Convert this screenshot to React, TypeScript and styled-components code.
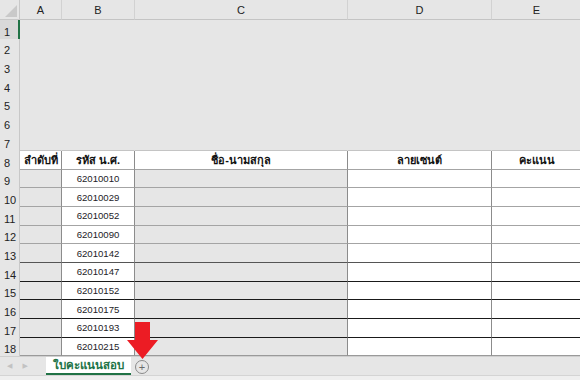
import React from 'react';
import styled, { createGlobalStyle } from 'styled-components';

const GlobalStyle = createGlobalStyle`
  html, body {
    margin: 0;
    padding: 0;
    background: #e6e6e6;
    overflow: hidden;
  }
  body {
    font-family: "Liberation Sans", "Noto Sans", "DejaVu Sans", sans-serif;
  }
`;

const Window = styled.div`
  position: relative;
  width: 580px;
  height: 380px;
  display: flex;
  flex-direction: column;
  background: #e6e6e6;
  overflow: hidden;
`;

const Sheet = styled.div`
  display: grid;
  grid-template-columns: 20px 42px 73px 213px 144px 90px;
  grid-template-rows: 20px repeat(18, 18.7px);
  width: 580px;
  overflow: hidden;
`;

const Corner = styled.div`
  position: relative;
  border-right: 1px solid #c8c8c8;
  border-bottom: 1px solid #c8c8c8;
  &::after {
    content: '';
    position: absolute;
    right: 2px;
    bottom: 2px;
    border-style: solid;
    border-width: 0 0 12px 12px;
    border-color: transparent transparent #c9c9c9 transparent;
  }
`;

const ColHead = styled.div`
  display: flex;
  align-items: center;
  justify-content: center;
  font-size: 11px;
  color: #222;
  border-right: 1px solid #d2d2d2;
  border-bottom: 1px solid #c4c4c4;
  padding-top: 1px;
`;

const RowHead = styled.div<{ $active?: boolean }>`
  display: flex;
  align-items: flex-end;
  padding: 0 0 1px 4px;
  font-size: 11px;
  color: #222;
  border-right: ${({ $active }) => ($active ? '2px solid #217346' : '1px solid #c8c8c8')};
  background: ${({ $active }) => ($active ? '#d9d9d9' : 'transparent')};
`;

const Cell = styled.div<{ $bg: string; $right: string; $bottom: string }>`
  display: flex;
  align-items: center;
  justify-content: center;
  background: ${({ $bg }) => $bg};
  border-right: 1px solid ${({ $right }) => $right};
  border-bottom: 1px solid ${({ $bottom }) => $bottom};
  box-sizing: border-box;
  overflow: hidden;
  white-space: nowrap;
`;

const HeadText = styled.span`
  font-size: 11px;
  font-weight: bold;
  color: #111;
`;

const IdText = styled.span`
  font-size: 9.6px;
  color: #1c1c28;
`;

const TabBar = styled.div`
  display: flex;
  align-items: stretch;
  height: 18px;
  background: #e6e6e6;
  border-top: 1px solid #cfcfcf;
`;

const NavArrows = styled.div`
  display: flex;
  align-items: center;
  gap: 10px;
  width: 46px;
  padding-left: 7px;
  box-sizing: border-box;
  font-size: 7px;
  color: #c2c2c2;
`;

const Tab = styled.div`
  display: flex;
  align-items: center;
  justify-content: center;
  width: 85px;
  background: #fff;
  border-bottom: 2px solid #217346;
  box-sizing: border-box;
  font-size: 11.5px;
  font-weight: bold;
  color: #217346;
`;

const AddButton = styled.div`
  display: flex;
  align-items: center;
  justify-content: center;
  width: 12px;
  height: 12px;
  margin: 3px 0 0 4px;
  border: 1px solid #8a8a8a;
  border-radius: 50%;
  font-size: 11px;
  line-height: 1;
  color: #6a6a6a;
`;

const BottomStrip = styled.div`
  flex: 1;
  background: #efefef;
  border-top: 1px solid #d4d4d4;
`;

const Arrow = styled.svg`
  position: absolute;
  left: 127px;
  top: 322px;
`;

const columns = ['A', 'B', 'C', 'D', 'E'];
const headers = ['ลำดับที่', 'รหัส น.ศ.', 'ชื่อ-นามสกุล', 'ลายเซนต์', 'คะแนน'];
const ids = [
  '62010010',
  '62010029',
  '62010052',
  '62010090',
  '62010142',
  '62010147',
  '62010152',
  '62010175',
  '62010193',
  '62010215'
];
const fills = ['#e6e6e6', '#ffffff', '#e6e6e6', '#ffffff', '#ffffff'];

function bottomLine(row: number) {
  if (row < 7) return 'transparent';
  if (row === 7) return '#c4c4c4';
  if (row < 13) return '#a4a4a4';
  if (row === 13) return '#555';
  if (row < 18) return '#1a1a1a';
  return '#9a9a9a';
}

function App() {
  const rows = Array.from({ length: 18 }, (_, i) => i + 1);
  return (
    <Window>
      <GlobalStyle />
      <Sheet>
        <Corner />
        {columns.map((c) => (
          <ColHead key={c}>{c}</ColHead>
        ))}
        {rows.map((r) => (
          <React.Fragment key={r}>
            <RowHead $active={r === 1}>{r}</RowHead>
            {columns.map((c, ci) => {
              const table = r >= 8;
              const bg = !table ? '#e6e6e6' : r === 8 ? '#ffffff' : fills[ci];
              return (
                <Cell
                  key={c}
                  $bg={bg}
                  $right={table ? '#8c8c8c' : 'transparent'}
                  $bottom={bottomLine(r)}
                >
                  {r === 8 && <HeadText>{headers[ci]}</HeadText>}
                  {r > 8 && ci === 1 && <IdText>{ids[r - 9]}</IdText>}
                </Cell>
              );
            })}
          </React.Fragment>
        ))}
      </Sheet>
      <TabBar>
        <NavArrows>
          <span>◀</span>
          <span>▶</span>
        </NavArrows>
        <Tab>ใบคะแนนสอบ</Tab>
        <AddButton>+</AddButton>
      </TabBar>
      <BottomStrip />
      <Arrow width="31" height="37" viewBox="0 0 31 37">
        <polygon points="8,0 23,0 23,18 31,18 15.5,37 0,18 8,18" fill="#ec1c24" />
      </Arrow>
    </Window>
  );
}

export default App;
